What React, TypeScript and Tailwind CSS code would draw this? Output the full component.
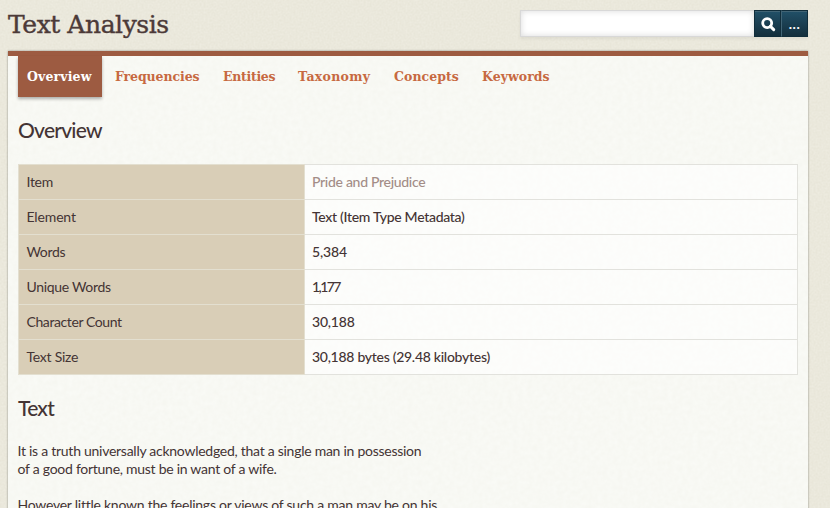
const tabs = [
  { label: 'Overview', cls: 'w-[84px] pl-[9px] bg-[#9d5b41] text-white shadow-[0_2px_3px_rgba(0,0,0,0.3)] tracking-[0.15px]' },
  { label: 'Frequencies', cls: 'w-[108px] pl-[13px] text-[#c76941] tracking-[-0.08px]' },
  { label: 'Entities', cls: 'w-[75px] pl-[13px] text-[#c76941] tracking-[-0.3px]' },
  { label: 'Taxonomy', cls: 'w-[96px] pl-[13px] text-[#c76941] tracking-[0.3px]' },
  { label: 'Concepts', cls: 'w-[88px] pl-[13px] text-[#c76941] tracking-[0.05px]' },
  { label: 'Keywords', cls: 'w-[92px] pl-[13px] text-[#c76941] tracking-[0.05px]' },
];

const rows = [
  { name: 'Item', value: 'Pride and Prejudice', n: 'tracking-[-0.3px]', v: 'text-[#a38d87] tracking-[-0.3px]' },
  { name: 'Element', value: 'Text (Item Type Metadata)', n: 'tracking-[-0.15px]', v: 'tracking-[-0.3px]' },
  { name: 'Words', value: '5,384', n: 'tracking-[-0.35px]', v: 'tracking-[-0.15px]' },
  { name: 'Unique Words', value: '1,177', n: 'tracking-[-0.32px]', v: 'tracking-[-1.6px]' },
  { name: 'Character Count', value: '30,188', n: 'tracking-[-0.4px]', v: 'tracking-[-0.2px]' },
  { name: 'Text Size', value: '30,188 bytes (29.48 kilobytes)', n: 'tracking-[-0.25px]', v: 'tracking-[-0.28px]' },
];

function Paper({ id, opacity, frequency }: { id: string; opacity: number; frequency: number }) {
  return (
    <svg className="pointer-events-none absolute inset-0 -z-10 h-full w-full" aria-hidden="true">
      <filter id={id} x="0" y="0" width="100%" height="100%">
        <feTurbulence type="fractalNoise" baseFrequency={frequency} numOctaves="3" seed="4" />
        <feColorMatrix values={`0 0 0 0 0.4  0 0 0 0 0.37  0 0 0 0 0.22  ${opacity} 0 0 0 0`} />
      </filter>
      <rect width="100%" height="100%" filter={`url(#${id})`} />
    </svg>
  );
}

export default function App() {
  return (
    <div className="relative isolate h-[508px] w-[830px] overflow-hidden bg-[#efede2] pl-2 font-['Lato','Open_Sans',sans-serif] text-sm text-[#443434]">
      <Paper id="page-paper" opacity={0.13} frequency={0.5} />
      <header className="flex h-[51px] w-[800px] items-start justify-between">
        <h1 className="mt-[7px] whitespace-nowrap font-['DejaVu_Serif',serif] text-[25px] leading-9 tracking-[-0.45px] text-[#4c3a38] [-webkit-text-stroke:0.4px_#4c3a38]">
          Text Analysis
        </h1>
        <form className="mt-[10px] flex h-[27px] shadow-[0_2px_3px_rgba(0,0,0,0.06)]">
          <input
            aria-label="Search"
            className="h-[27px] w-[234px] border border-r-0 border-[#d8d8d8] bg-white shadow-[inset_0_0_6px_rgba(0,0,0,0.15)] outline-none"
          />
          <button
            type="button"
            aria-label="Submit search"
            className="flex w-[27px] items-center justify-center border border-[#102d3b] bg-linear-to-b from-[#215068] to-[#142f3d] shadow-[inset_0_1px_0_#416475]"
          >
            <svg viewBox="0 0 16 16" className="h-4 w-4" fill="none" stroke="white">
              <circle cx="7.2" cy="7.1" r="4.5" strokeWidth="2.8" />
              <path d="M10.4 10.4l3.3 3.2" strokeWidth="3" strokeLinecap="round" />
            </svg>
          </button>
          <button
            type="button"
            aria-label="Search options"
            className="flex w-[27px] items-end justify-center border border-l-[#416475] border-t-[#102d3b] border-r-[#102d3b] border-b-[#102d3b] bg-linear-to-b from-[#215068] to-[#142f3d] pb-[5px] font-bold leading-none tracking-[0.5px] text-white shadow-[inset_0_1px_0_#416475]"
          >
            ...
          </button>
        </form>
      </header>

      <main className="relative isolate h-[475px] w-[800px] border-t-[5px] border-[#9d5b41] bg-[#fafbf7] shadow-[0_0_2px_rgba(0,0,0,0.4)]">
        <Paper id="panel-paper" opacity={0.06} frequency={0.2} />
        <nav className="flex h-[41px] px-[10px] font-['DejaVu_Serif',serif] text-[12.5px] font-bold leading-[41px]">
          {tabs.map((tab) => (
            <a key={tab.label} className={`h-[41px] whitespace-nowrap ${tab.cls}`}>
              {tab.label}
            </a>
          ))}
        </nav>

        <section className="px-[10px] pt-5">
          <h2 className="text-[21px] font-medium leading-[26px] tracking-[-0.75px] text-[#443434]">Overview</h2>
          <table className="mt-[21px] w-[780px] table-fixed border-collapse text-left">
            <colgroup>
              <col className="w-[286px]" />
              <col />
            </colgroup>
            <tbody>
              {rows.map((row) => (
                <tr key={row.name} className="h-[35px]">
                  <th className={`border border-[#e3dfd0] bg-[#d9ceb7] px-[7.5px] py-0 font-normal leading-[18px] ${row.n}`}>
                    <span className="whitespace-nowrap">{row.name}</span>
                  </th>
                  <td className={`border border-[#e2e2dd] bg-white/60 px-[7px] py-0 font-medium leading-[18px] ${row.v}`}>
                    <span className="whitespace-nowrap">{row.value}</span>
                  </td>
                </tr>
              ))}
            </tbody>
          </table>
          <h2 className="mt-5 text-[21px] font-medium leading-[26px] tracking-[-0.75px] text-[#443434]">Text</h2>
          <p className="-ml-[0.5px] mt-[21px] whitespace-nowrap leading-[18px] tracking-[-0.265px]">
            <span>It is a truth universally acknowledged, that a single man in possession</span>
            <br />
            <span>of a good fortune, must be in want of a wife.</span>
          </p>
          <p className="-ml-[0.5px] mt-[18px] whitespace-nowrap leading-[18px] tracking-[-0.25px]">
            However little known the feelings or views of such a man may be on his
          </p>
        </section>
      </main>
    </div>
  );
}
